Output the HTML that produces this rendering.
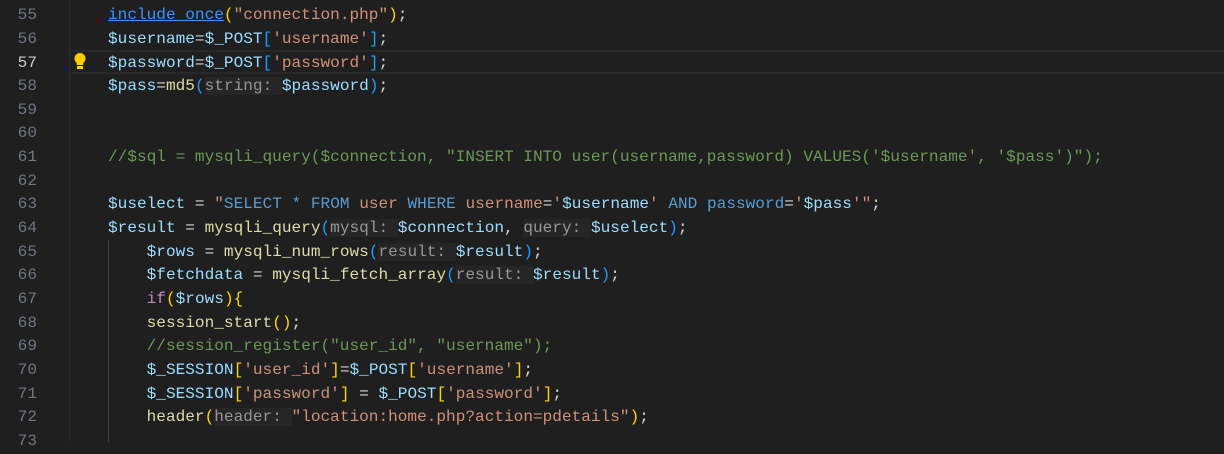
<!DOCTYPE html>
<html><head><meta charset="utf-8"><style>
html,body{margin:0;height:442px}
body{width:1224px;background:#1f1f1f;overflow:hidden;position:relative;font-family:"Liberation Mono",monospace;font-size:16.1px}
.gut{position:absolute;left:0;top:0;width:70px;height:442px;border-right:1px solid #2b2b2b;box-sizing:border-box}
.ln{position:absolute;left:0;width:37px;text-align:right;color:#6e7681;height:23.65px;line-height:23.65px}
.cl{position:absolute;left:108px;height:23.65px;line-height:23.65px;white-space:pre;color:#d4d4d4}
.v{color:#9cdcfe}.s{color:#ce9178}.f{color:#dcdcaa}.b{color:#179fff}.g{color:#ffd700}.c{color:#6a9955}.k{color:#569cd6}.p{color:#c586c0}
.h{color:#969696;background:#262626}
.ig{position:absolute;width:1px;background:#404040}
.cur{position:absolute;left:71px;right:0;border-top:2px solid #282828;border-bottom:2px solid #282828;box-sizing:border-box}
</style></head><body>
<div class="gut"></div>
<div class="cur" style="top:50px;height:24px"></div>
<div class="ig" style="left:108px;top:240px;height:202px"></div>
<svg style="position:absolute;left:73px;top:52px" width="14" height="18" viewBox="0 0 14 18"><path d="M7 1a5.5 5.5 0 0 0-3.3 9.9V13h6.6v-2.1A5.5 5.5 0 0 0 7 1z" fill="#ffcc00"/><rect x="4" y="14" width="6" height="3" fill="#ffcc00"/></svg>
<div id="c"></div>
<script>
const L=[
['55','<span class="f" style="text-decoration:underline;color:#3794ff">include_once</span><span class="g">(</span><span class="s">"connection.php"</span><span class="g">)</span>;'],
['56','<span class="v">$username</span>=<span class="v">$_POST</span><span class="b">[</span><span class="s">\'username\'</span><span class="b">]</span>;'],
['57','<span class="v">$password</span>=<span class="v">$_POST</span><span class="b">[</span><span class="s">\'password\'</span><span class="b">]</span>;'],
['58','<span class="v">$pass</span>=<span class="f">md5</span><span class="b">(</span><span class="h">string: </span><span class="v">$password</span><span class="b">)</span>;'],
['59',''],['60',''],
['61','<span class="c">//$sql = mysqli_query($connection, "INSERT INTO user(username,password) VALUES(\'$username\', \'$pass\')");</span>'],
['62',''],
['63','<span class="v">$uselect</span> = <span class="s">"</span><span class="k">SELECT</span> <span class="k">*</span> <span class="k">FROM</span> <span class="s">user</span> <span class="k">WHERE</span> <span class="s">username</span>=<span class="s">\'</span><span class="v">$username</span><span class="s">\'</span> <span class="k">AND</span> <span class="k">password</span>=<span class="s">\'</span><span class="v">$pass</span><span class="s">\'"</span>;'],
['64','<span class="v">$result</span> = <span class="f">mysqli_query</span><span class="b">(</span><span class="h">mysql: </span><span class="v">$connection</span>, <span class="h">query: </span><span class="v">$uselect</span><span class="b">)</span>;'],
['65','    <span class="v">$rows</span> = <span class="f">mysqli_num_rows</span><span class="b">(</span><span class="h">result: </span><span class="v">$result</span><span class="b">)</span>;'],
['66','    <span class="v">$fetchdata</span> = <span class="f">mysqli_fetch_array</span><span class="b">(</span><span class="h">result: </span><span class="v">$result</span><span class="b">)</span>;'],
['67','    <span class="p">if</span><span class="g">(</span><span class="v">$rows</span><span class="g">){</span>'],
['68','    <span class="f">session_start</span><span class="g">()</span>;'],
['69','    <span class="c">//session_register("user_id", "username");</span>'],
['70','    <span class="v">$_SESSION</span><span class="g">[</span><span class="s">\'user_id\'</span><span class="g">]</span>=<span class="v">$_POST</span><span class="g">[</span><span class="s">\'username\'</span><span class="g">]</span>;'],
['71','    <span class="v">$_SESSION</span><span class="g">[</span><span class="s">\'password\'</span><span class="g">]</span> = <span class="v">$_POST</span><span class="g">[</span><span class="s">\'password\'</span><span class="g">]</span>;'],
['72','    <span class="f">header</span><span class="g">(</span><span class="h">header: </span><span class="s">"location:home.php?action=pdetails"</span><span class="g">)</span>;'],
['73','']];
let h='';L.forEach((l,i)=>{const t=4.2+i*23.65;h+=`<div class="ln" style="top:${t}px;${l[0]=='57'?'color:#cccccc':''}">${l[0]}</div><div class="cl" style="top:${t}px">${l[1]}</div>`});
document.getElementById('c').innerHTML=h;
</script>
</body></html>
